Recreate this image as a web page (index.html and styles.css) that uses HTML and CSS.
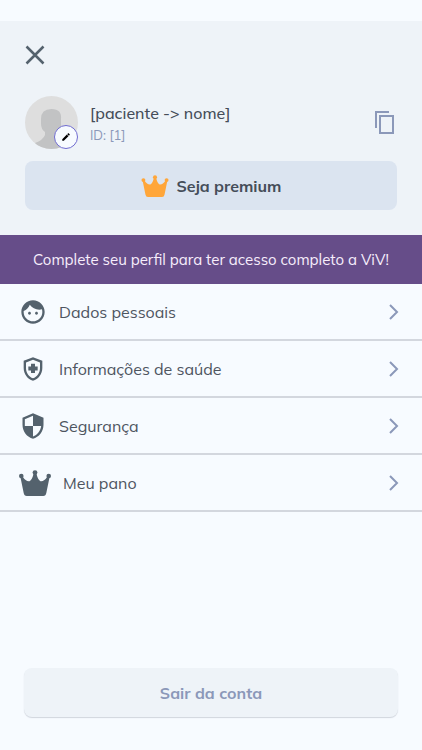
FILE: index.html
```html
<!DOCTYPE html>
<html lang="pt-BR">
	<head>
		<meta charset="UTF-8">
		<meta name="viewport" content="width=device-width, initial-scale=1">
		<title>Perfil</title>
		<link rel="stylesheet" href="styles.css">
	</head>
	<body>
		<svg class="defs" aria-hidden="true">
			<symbol id="crown" viewBox="0 0 32 26">
				<circle cx="2.3" cy="6" r="2.3"/>
				<circle cx="16" cy="2.6" r="2.4"/>
				<circle cx="29.7" cy="6" r="2.3"/>
				<path d="M1.500 7.500 3.500 6.500Q7 11.800 10.500 11.200 13 10 14.500 4h3q1.500 6 4 7.200 3.500.6 7-4.700l2 1L27.300 23q-.5 3-3 3H7.700q-2.500 0-3-3z"/>
			</symbol>
			<symbol id="chevron" viewBox="0 0 10 16">
				<path d="M1 1l7 7-7 7" fill="none" stroke="currentColor" stroke-width="2"/>
			</symbol>
		</svg>
		<header class="header">
			<button type="button" class="close" aria-label="Fechar">
				<svg width="20" height="20" viewBox="0 0 20 20"><path d="M1.500 1.500l17 17M18.500 1.500l-17 17" fill="none" stroke="currentColor" stroke-width="2.500"/></svg>
			</button>
			<div class="profile">
				<div class="avatar">
					<svg width="53" height="53" viewBox="0 0 53 53">
						<clipPath id="round"><circle cx="26.500" cy="26.500" r="26.500"/></clipPath>
						<g clip-path="url(#round)">
							<rect width="53" height="53" fill="#dedede"/>
							<path d="M16 23q0-10 10.500-10T36 23v6q0 5-3 8v3q4 3 10 5v8H8l2-6q8-3 10-8v-3q-4-3-4-8z" fill="#c2c3c4"/>
						</g>
					</svg>
					<button type="button" class="edit" aria-label="Editar foto">
						<svg width="10" height="10" viewBox="0 0 24 24"><path d="M3 17.250V21h3.750L17.810 9.940l-3.750-3.750L3 17.250zM20.710 7.040a1 1 0 0 0 0-1.410l-2.340-2.340a1 1 0 0 0-1.410 0l-1.830 1.830 3.750 3.750 1.830-1.830z"/></svg>
					</button>
				</div>
				<div class="info">
					<h1 class="name">[paciente -&gt; nome]</h1>
					<p class="id">ID: [1]</p>
				</div>
				<button type="button" class="copy" aria-label="Copiar ID">
					<svg width="20" height="24" viewBox="0 0 20 24"><path d="M1 17V1h13M5 5h13v17H5z" fill="none" stroke="currentColor" stroke-width="2"/></svg>
				</button>
			</div>
			<button type="button" class="btn premium">
				<svg class="crown" width="28" height="22"><use href="#crown"/></svg>
				Seja premium
			</button>
		</header>
		<p class="notice">Complete seu perfil para ter acesso completo a ViV!</p>
		<nav class="menu">
			<a href="#dados">
				<svg width="28" height="28" viewBox="0 0 24 24"><path d="M9 11.750c-.69 0-1.250.56-1.250 1.250s.56 1.250 1.250 1.250 1.250-.56 1.250-1.250-.56-1.250-1.250-1.250zm6 0c-.69 0-1.250.56-1.250 1.250s.56 1.250 1.250 1.250 1.250-.56 1.250-1.250-.56-1.250-1.250-1.250zM12 2C6.480 2 2 6.480 2 12s4.480 10 10 10 10-4.480 10-10S17.520 2 12 2zm0 18c-4.410 0-8-3.590-8-8 0-.29.02-.58.05-.86 2.360-1.050 4.230-2.980 5.210-5.370C11.070 8.330 14.050 10 17.420 10c.78 0 1.530-.09 2.250-.26.21.71.33 1.470.33 2.260 0 4.410-3.590 8-8 8z"/></svg>
				<span>Dados pessoais</span>
				<svg class="chevron" width="10" height="16"><use href="#chevron"/></svg>
			</a>
			<a href="#saude">
				<svg width="28" height="28" viewBox="0 0 24 24"><path d="M10.300 13.200H8v-3.400h2.300V7.500h3.400v2.300H16v3.400h-2.300v2.300h-3.400zM12 2L4 5v6.090c0 5.050 3.410 9.760 8 10.910 4.590-1.150 8-5.860 8-10.910V5l-8-3zm6 9.090c0 4-2.550 7.700-6 8.830-3.450-1.130-6-4.820-6-8.830v-4.700l6-2.250 6 2.250v4.700z"/></svg>
				<span>Informações de saúde</span>
				<svg class="chevron" width="10" height="16"><use href="#chevron"/></svg>
			</a>
			<a href="#seguranca">
				<svg width="28" height="28" viewBox="0 0 24 24"><path d="M12 1L3 5v6c0 5.550 3.840 10.740 9 12 5.160-1.260 9-6.450 9-12V5l-9-4zm0 10.990h7c-.53 4.120-3.280 7.790-7 8.940V12H5V6.300l7-3.110v8.800z"/></svg>
				<span>Segurança</span>
				<svg class="chevron" width="10" height="16"><use href="#chevron"/></svg>
			</a>
			<a href="#plano">
				<svg width="32" height="26"><use href="#crown"/></svg>
				<span>Meu pano</span>
				<svg class="chevron" width="10" height="16"><use href="#chevron"/></svg>
			</a>
		</nav>
		<footer class="footer">
			<button type="button" class="btn logout">Sair da conta</button>
		</footer>
	</body>
</html>
```

FILE: styles.css
```css
*{
	box-sizing: border-box;
}
body{
	margin: 0;
	min-height: 100vh;
	display: flex;
	flex-direction: column;
	background: #f7fbff;
	color: #454d59;
	font-family: Mulish, Muli, Lato, sans-serif;
	font-size: 16px;
	line-height: 24px;
}
h1, p{
	margin: 0;
}
button{
	padding: 0;
	border: none;
	background: none;
	color: inherit;
	font: inherit;
	cursor: pointer;
}
svg{
	display: block;
	flex: none;
	fill: currentColor;
}
.defs{
	position: absolute;
	width: 0;
	height: 0;
}
.header{
	margin-top: 21px;
	padding: 24px 25px 25px;
	background: #eef3f8;
}
.close{
	display: block;
	color: #54626d;
}
.profile{
	display: flex;
	align-items: center;
	gap: 12px;
	margin-top: 31px;
	margin-bottom: 12px;
}
.avatar{
	position: relative;
}
.edit{
	position: absolute;
	right: 0;
	bottom: 0;
	display: flex;
	align-items: center;
	justify-content: center;
	width: 24px;
	height: 24px;
	border: 1px solid #6f6bd0;
	border-radius: 50%;
	background: #f7fbff;
	color: #000;
}
.info{
	flex: 1;
}
.name{
	font-size: 16px;
	font-weight: 500;
}
.id{
	color: #8b98b9;
	font-size: 13px;
	line-height: 20px;
}
.copy{
	padding-right: 2px;
	color: #8b98b9;
}
.btn{
	display: flex;
	align-items: center;
	justify-content: center;
	gap: 8px;
	width: 100%;
	height: 49px;
	border-radius: 8px;
	font-weight: 700;
}
.premium{
	background: #dbe4f0;
}
.crown{
	color: #ffa63a;
}
.notice{
	padding: 12px;
	background: #664d89;
	color: #f7eefc;
	font-size: 15px;
	line-height: 25px;
	text-align: center;
}
.menu a{
	display: flex;
	align-items: center;
	gap: 12px;
	height: 57px;
	padding: 0 23px 0 19px;
	border-bottom: 2px solid #d3d7de;
	color: #4e555f;
	text-decoration: none;
}
.menu svg{
	color: #54626d;
}
.menu span{
	flex: 1;
}
.menu .chevron{
	color: #8b98b9;
}
.footer{
	margin-top: auto;
	padding: 24px 24px 33px;
}
.logout{
	background: #eef3f8;
	box-shadow: 0 1px 1px #d0d5dd;
	color: #8b98b9;
}
```
